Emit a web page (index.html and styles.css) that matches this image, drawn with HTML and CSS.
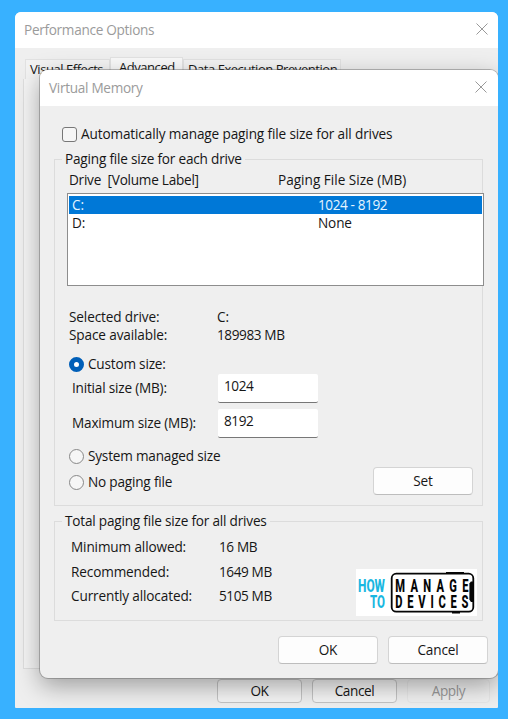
FILE: index.html
```html
<!DOCTYPE html>
<html lang="en">
<head>
<meta charset="utf-8">
<title>Virtual Memory</title>
<link rel="stylesheet" href="styles.css">
</head>
<body>
<main class="desktop">
  <section class="window">
    <header class="titlebar">
      <span class="title">Performance Options</span>
      <svg class="close" viewBox="0 0 12 12"><path d="M.5.5l11 11M11.5.5l-11 11"/></svg>
    </header>
    <nav class="tabs">
      <span class="tab tab-visual">Visual Effects</span>
      <span class="tab tab-advanced">Advanced</span>
      <span class="tab tab-dep">Data Execution Prevention</span>
    </nav>
    <div class="pane"></div>
    <footer class="outer-actions">
      <button>OK</button><button>Cancel</button><button class="disabled">Apply</button>
    </footer>
  </section>

  <section class="dialog">
    <header class="titlebar">
      <span class="title">Virtual Memory</span>
      <svg class="close" viewBox="0 0 12 12"><path d="M.5.5l11 11M11.5.5l-11 11"/></svg>
    </header>
    <div class="body">
      <label class="auto"><i class="checkbox"></i><span>Automatically manage paging file size for all drives</span></label>

      <div class="group group-drives">
        <div class="legend">Paging file size for each drive</div>
        <div class="list-head"><span>Drive&nbsp; [Volume Label]</span><span class="size-head">Paging File Size (MB)</span></div>
        <div class="listbox">
          <div class="item selected"><span>C:</span><span class="num">1024 - 8192</span></div>
          <div class="item"><span>D:</span><span>None</span></div>
        </div>
        <div class="facts">
          <span>Selected drive:</span><span>C:</span>
          <span>Space available:</span><span class="num">189983 MB</span>
        </div>
        <label class="radio-row custom"><i class="radio checked"></i><span>Custom size:</span></label>
        <div class="fields">
          <span>Initial size (MB):</span><div class="input num">1024</div>
          <span>Maximum size (MB):</span><div class="input num">8192</div>
        </div>
        <div class="choices">
          <div class="radios">
            <label class="radio-row"><i class="radio"></i><span>System managed size</span></label>
            <label class="radio-row"><i class="radio"></i><span>No paging file</span></label>
          </div>
          <button class="set">Set</button>
        </div>
      </div>

      <div class="group group-total">
        <div class="legend">Total paging file size for all drives</div>
        <div class="totals-row">
          <div class="totals">
            <span>Minimum allowed:</span><span class="num">16 MB</span>
            <span>Recommended:</span><span class="num">1649 MB</span>
            <span>Currently allocated:</span><span class="num">5105 MB</span>
          </div>
          <svg class="logo" viewBox="0 0 121 47">
            <rect width="121" height="47" fill="#fff"/>
            <g class="how"><text x="2" y="23" textLength="27" lengthAdjust="spacingAndGlyphs">HOW</text><text x="14" y="39" textLength="15" lengthAdjust="spacingAndGlyphs">TO</text></g>
            <rect x="35.7" y="4.7" width="81.6" height="38" rx="4.5" fill="none" stroke="#050505" stroke-width="1.8"/>
            <path d="M90 3.8h18M96 43.6h8" stroke="#050505" stroke-width="1.6"/>
            <path d="M117.5 12.5h-2.6l-1.5 2v16l1.5 2.5h2.6z" fill="#050505"/>
            <g class="brand"><g transform="translate(39.3 22.5) scale(.62 1)"><text textLength="118">MANAGE</text></g><g transform="translate(39.3 38.7) scale(.62 1)"><text textLength="118">DEVICES</text></g></g>
          </svg>
        </div>
      </div>

      <footer class="actions"><button>OK</button><button>Cancel</button></footer>
    </div>
  </section>
</main>
</body>
</html>
```
FILE: styles.css
```css
* { box-sizing: border-box; }
body { margin: 0; }
.desktop {
  position: relative;
  width: 508px;
  height: 719px;
  padding: 12px 10px 11px 15px;
  overflow: hidden;
  background: #38b1ff;
  font-family: "Open Sans", "Noto Sans", sans-serif;
  font-size: 13.6px;
  letter-spacing: -.13px;
  line-height: 18px;
  color: #161616;
  white-space: nowrap;
}
button {
  padding: 0 0 1px;
  font: inherit;
  letter-spacing: inherit;
  color: inherit;
  background: #fdfdfd;
  border: 1px solid #d4d4d4;
  border-bottom-color: #bdbdbd;
  border-radius: 4px;
}
.window {
  display: flex;
  flex-direction: column;
  height: 696px;
  background: #efefef;
  border-radius: 6px 6px 1px 1px;
  overflow: hidden;
}
.titlebar {
  display: flex;
  align-items: center;
  justify-content: space-between;
  flex: none;
  height: 36px;
  padding: 0 11px 0 9px;
  background: #fff;
  color: #9b9b9b;
  letter-spacing: -.3px;
}
.close { width: 12px; height: 12px; margin-top: -2px; }
.window .close { margin-right: -1px; }
.close path { fill: none; stroke: #999; stroke-width: 1; }
.tabs {
  display: flex;
  align-items: flex-end;
  flex: none;
  height: 31px;
  padding-left: 10px;
  font-size: 13px;
  letter-spacing: -.45px;
}
.tab {
  height: 20px;
  padding-left: 4px;
  border: 1px solid #e2e2e2;
  border-bottom: 0;
  background: #f3f3f3;
}
.tab-visual { width: 85px; }
.tab-advanced { width: 73px; height: 22px; padding-left: 8px; background: #f9f9f9; }
.tab-dep { width: 158px; }
.pane {
  flex: none;
  height: 590px;
  margin: 0 8px;
  background: #f4f4f4;
  border: 1px solid #dedede;
  border-top: 0;
}
.outer-actions { display: flex; justify-content: flex-end; gap: 10px; padding: 10px 8px 0 0; letter-spacing: -.4px; }
.outer-actions button { width: 85px; height: 24px; background: #f5f5f5; border-color: #c4c4c4; }
.outer-actions .disabled { width: 83px; color: #999; border-color: #e7e7e7; background: #f0f0f0; }

.dialog {
  position: absolute;
  left: 40px;
  top: 70px;
  width: 458px;
  height: 608px;
  background: #efefef;
  border-radius: 8px;
  box-shadow: 0 0 0 1px rgba(90,90,90,.4), 0 8px 24px rgba(0,0,0,.34);
  clip-path: inset(-20px 0 -30px -25px);
}
.dialog .titlebar { border-radius: 8px 8px 0 0; }
.body { padding: 19px 15px 0 14px; }
.auto { display: flex; align-items: center; gap: 4px; height: 18px; padding-left: 8px; }
.checkbox { width: 15px; height: 15px; border: 1px solid #777; border-radius: 3px; background: #f6f6f6; }
.group { border: 1px solid #dcdcdc; }
.group-drives { height: 347px; margin-top: 16px; }
.group-total { height: 100px; margin-top: 15px; }
.legend { width: max-content; height: 18px; margin: -10px 0 0 7px; padding: 0 3px; background: #efefef; letter-spacing: -.2px; }
.list-head { display: grid; grid-template-columns: 209px auto; height: 24px; padding: 3px 0 0 14px; letter-spacing: -.25px; }
.size-head { letter-spacing: 0; }
.num { letter-spacing: -.4px; }
.listbox { height: 93px; margin: 1px -2px 0 12px; padding: 2px 1px 0 1px; border: 1px solid #8d8d8d; background: #fff; }
.item { display: grid; grid-template-columns: 246px auto; height: 18px; padding-left: 3px; line-height: 17px; }
.selected { color: #e5f5ff; background: #0078d7; }
.facts { display: grid; grid-template-columns: 148px auto; grid-auto-rows: 18px; margin: 22px 0 0 14px; }
.radio-row { display: flex; align-items: center; gap: 4px; height: 18px; letter-spacing: -.2px; }
.radio { width: 15px; height: 15px; border: 1px solid #888; border-radius: 50%; background: #f6f6f6; }
.radio.checked { border: 5px solid #005fb8; background: #fff; }
.custom { margin: 11px 0 0 14px; }
.fields { display: grid; grid-template-columns: 146px 100px; row-gap: 6px; margin: 1px 0 0 17px; align-items: center; line-height: 17px; letter-spacing: -.2px; }
.fields > span { margin-top: -2px; }
.input { height: 29px; padding: 3px 0 0 6px; background: #fff; border-bottom: 1px solid #777; border-radius: 2px; }
.choices { display: flex; justify-content: space-between; padding: 9px 9px 0 14px; }
.radios { display: grid; gap: 8px; align-content: start; }
.set { width: 100px; height: 28px; margin-top: 20px; }
.totals-row { display: flex; justify-content: space-between; padding: 5px 5px 0 16px; }
.totals { display: grid; grid-template-columns: 148px auto; grid-template-rows: repeat(3, 24.5px); align-content: start; align-items: center; }
.logo { width: 121px; height: 47px; margin-top: 34px; letter-spacing: 0; }
.logo text { font-family: Roboto, sans-serif; font-weight: 800; }
.how { font-size: 18px; fill: #19b7e1; }
.brand { font-size: 18px; fill: #050505; }
.actions { display: flex; justify-content: flex-end; gap: 10px; margin: 15px -5px 0 0; }
.actions button { width: 100px; height: 28px; }
```
